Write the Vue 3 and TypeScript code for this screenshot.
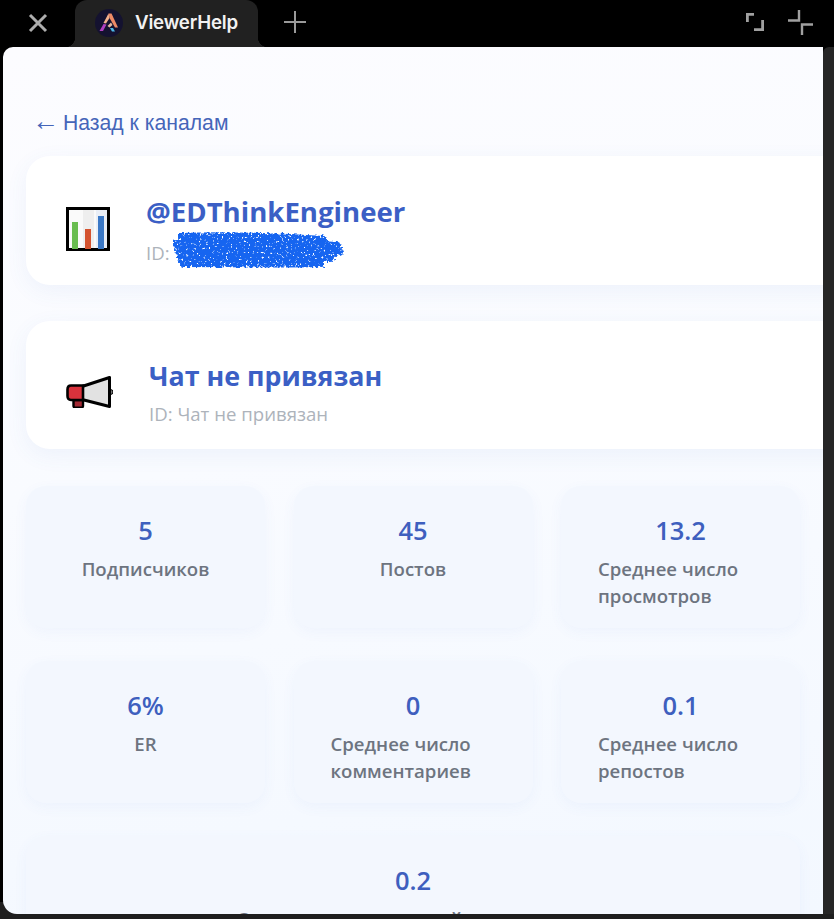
<script setup lang="ts">
interface Stat { value: string; label: string; wide?: boolean }
const stats: Stat[] = [
  { value: '5', label: 'Подписчиков' },
  { value: '45', label: 'Постов' },
  { value: '13.2', label: 'Среднее число просмотров' },
  { value: '6%', label: 'ER' },
  { value: '0', label: 'Среднее число комментариев' },
  { value: '0.1', label: 'Среднее число репостов' },
  { value: '0.2', label: 'Среднее число реакций на один пост', wide: true },
]
</script>

<template>
  <div class="shell">
    <header class="topbar">
      <svg class="close" viewBox="0 0 20 20" width="20" height="20" fill="none" stroke="#aeaeae" stroke-width="3">
        <path d="M2 2 18 18M18 2 2 18" />
      </svg>
      <div class="tab">
        <svg class="logo" viewBox="0 0 28 28" width="28" height="28">
          <circle cx="14" cy="14" r="14" fill="#141230" />
          <path d="M13.500 4.500 8.500 14 11 14.500 14.500 9Z" fill="#f3b08c" />
          <path d="M13.500 4.500 16.500 4.500 23 18.500 20 18.500 14.500 9Z" fill="#ee8a66" />
          <path d="M8.500 15 11.500 15.500 8 22 4.500 22Z" fill="#b13fc0" />
          <path d="M12.500 17 16 13.500 17.500 16 14.500 18.500Z" fill="#e8b9a0" />
          <path d="M15 19 18 19 20 22.500 17 22.500Z" fill="#4db8e8" />
        </svg>
        <span class="tab-title">ViewerHelp</span>
      </div>
      <svg class="plus" viewBox="0 0 22 22" width="22" height="22" fill="none" stroke="#9a9a9a" stroke-width="2">
        <path d="M11 0V22M0 11H22" />
      </svg>
      <div class="spacer"></div>
      <svg class="expand" viewBox="0 0 18 18" width="18" height="18" fill="none" stroke="#a0a0a0" stroke-width="2.800">
        <path d="M8 1.400H1.400V9M16.600 7V16.600H8" />
      </svg>
      <svg class="compress" viewBox="0 0 25 25" width="25" height="25" fill="none" stroke="#a0a0a0" stroke-width="2.400">
        <path d="M0 10.500H11V0M25 14.500H14V25" />
      </svg>
    </header>

    <div class="body-row">
      <main class="view">
        <a class="back"><span class="arrow">←</span><span>Назад к каналам</span></a>

        <section class="card card-first">
          <svg class="icon-chart" viewBox="0 0 44 44" width="44" height="44">
            <rect x="1.500" y="1.500" width="41" height="41" fill="#fafafa" stroke="#000" stroke-width="3" />
            <rect x="17" y="3" width="11" height="38" fill="#eeeeee" />
            <rect x="30" y="3" width="11" height="38" fill="#e9eef6" />
            <rect x="6" y="15" width="6" height="27" fill="#69bd50" />
            <rect x="19" y="22" width="6" height="20" fill="#d4532f" />
            <rect x="32" y="9" width="6" height="33" fill="#3a78c6" />
          </svg>
          <div class="info">
            <h2 class="title title-first">@EDThinkEngineer</h2>
            <p class="sub sub-first">
              ID:
              <svg class="scribble" viewBox="0 0 172 38" width="172" height="38">
                <defs>
                  <filter id="rough" x="-5%" y="-15%" width="110%" height="130%">
                    <feTurbulence type="fractalNoise" baseFrequency="0.35" numOctaves="2" seed="4" result="n" />
                    <feDisplacementMap in="SourceGraphic" in2="n" scale="7" result="d" />
                    <feTurbulence type="fractalNoise" baseFrequency="0.45" numOctaves="2" seed="9" />
                    <feColorMatrix type="matrix" values="0 0 0 0 0  0 0 0 0 0  0 0 0 0 0  0 0 0 -7 5.400" result="holes" />
                    <feComposite in="d" in2="holes" operator="in" />
                  </filter>
                </defs>
                <g filter="url(#rough)" fill="none" stroke="#1565f0" stroke-linecap="round" stroke-width="8">
                  <path d="M8 7C50 5 110 7 150 10" />
                  <path d="M4 14C50 12 120 13 164 16" />
                  <path d="M6 21C60 20 120 19 166 22" />
                  <path d="M8 28C60 27 110 28 158 28" />
                  <path d="M10 33C50 33 100 34 148 33" />
                </g>
              </svg>
            </p>
          </div>
        </section>

        <section class="card card-second">
          <svg class="icon-mega" viewBox="0 0 47 32" width="47" height="32">
            <circle cx="44.500" cy="16" r="2.500" fill="#777" stroke="#000" stroke-width="1" />
            <path d="M7.500 24H17V30A1.800 1.800 0 0 1 15.200 31.800H9.300A1.800 1.800 0 0 1 7.500 30Z" fill="#a32a34" stroke="#000" stroke-width="2.400" />
            <path d="M16 10.500 43.500 1.500V30.500L16 23.500Z" fill="#e2e2e2" stroke="#000" stroke-width="3" stroke-linejoin="round" />
            <path d="M5 9.500H17V24H5Q1.500 24 1.500 20V13.500Q1.500 9.500 5 9.500Z" fill="#d9323c" stroke="#000" stroke-width="2.600" />
          </svg>
          <div class="info">
            <h2 class="title title-second">Чат не привязан</h2>
            <p class="sub">ID: Чат не привязан</p>
          </div>
        </section>

        <section class="stats">
          <div v-for="s in stats" :key="s.value + s.label" class="stat" :class="{ wide: s.wide }">
            <div class="value">{{ s.value }}</div>
            <div class="label">{{ s.label }}</div>
          </div>
        </section>
      </main>
      <div class="scrollbar"></div>
    </div>
  </div>
</template>

<style>
html, body { margin: 0; background: #000; overflow: hidden; }
</style>

<style scoped>
.shell {
  width: 834px;
  height: 919px;
  display: flex;
  flex-direction: column;
  background: #000;
  overflow: hidden;
}
.topbar {
  height: 47px;
  flex: none;
  display: flex;
  align-items: center;
  padding-left: 28px;
  padding-right: 21px;
  box-sizing: border-box;
}
.close { flex: none; width: 20px; height: 20px; margin-bottom: 2px; }
.tab {
  position: relative;
  margin-left: 27px;
  width: 183px;
  height: 47px;
  flex: none;
  display: flex;
  align-items: center;
  gap: 12px;
  padding-left: 20px;
  box-sizing: border-box;
  background: #212121;
  border-radius: 12px 12px 0 0;
}
.tab::before,
.tab::after {
  content: "";
  position: absolute;
  bottom: 0;
  width: 10px;
  height: 10px;
}
.tab::before { left: -10px; background: radial-gradient(circle at 0 0, transparent 10px, #212121 10.500px); }
.tab::after { right: -10px; background: radial-gradient(circle at 100% 0, transparent 10px, #212121 10.500px); }
.logo { flex: none; margin-bottom: 2px; }
.tab-title {
  font-family: Inter, "Liberation Sans", sans-serif;
  font-size: 18.700px;
  font-weight: 600;
  color: #f2f2f2;
  letter-spacing: -0.2px;
  margin-bottom: 3px;
}
.plus { flex: none; margin-left: 26px; margin-bottom: 3px; }
.spacer { flex: 1; }
.expand { flex: none; margin-bottom: 3px; }
.compress { flex: none; margin-left: 24px; margin-bottom: 3px; }

.body-row {
  flex: 1;
  min-height: 0;
  display: flex;
  padding: 0 0 5px 3px;
  background: linear-gradient(#000 98%, #1e1e1e 98%);
}
.view {
  width: 820px;
  flex: none;
  overflow: hidden;
  box-sizing: border-box;
  padding: 64px 0 0 23px;
  border-radius: 10px 0 0 14px;
  background: linear-gradient(170deg, #fcfcff 0%, #f9fbff 45%, #f3f8ff 100%);
}
.scrollbar {
  width: 11px;
  flex: none;
  background: #262626;
  border-radius: 6px 0 0 0;
}
.back {
  display: flex;
  align-items: center;
  gap: 4px;
  height: 24px;
  margin-left: 6px;
  font-family: "Liberation Sans", Arial, sans-serif;
  font-size: 21.200px;
  line-height: 24px;
  color: #4565b9;
  white-space: nowrap;
}
.arrow { font-size: 27px; line-height: 24px; margin-bottom: 4px; }
.card {
  margin-top: 21px;
  width: 840px;
  box-sizing: border-box;
  display: flex;
  gap: 36px;
  background: #fff;
  border-radius: 24px;
  padding-left: 40px;
  box-shadow: 0 6px 22px rgba(70, 110, 200, 0.07);
}
.card-first { height: 129px; padding-top: 36px; }
.card-second { height: 128px; margin-top: 36px; padding-top: 36px; }
.icon-chart { flex: none; margin-top: 15px; }
.icon-mega { flex: none; margin-top: 19px; }
.info { display: flex; flex-direction: column; }
.title {
  margin: 0;
  font-family: "Open Sans", "Noto Sans", sans-serif;
  line-height: 38px;
  font-weight: 700;
  color: #3b5fc5;
}
.title-first { font-size: 27.600px; }
.title-second { font-size: 26.800px; }
.sub {
  margin: 5px 0 0;
  font-family: "Open Sans", "Noto Sans", sans-serif;
  font-size: 18.600px;
  line-height: 27px;
  color: #adb3bb;
  white-space: nowrap;
}
.sub-first {
  display: flex;
  align-items: center;
  gap: 3px;
  margin-top: 7px;
}
.scribble { flex: none; margin: -7px 0 0 0; }
.stats {
  margin-top: 37px;
  width: 774px;
  display: grid;
  grid-template-columns: repeat(3, 239px);
  gap: 33px 28.500px;
}
.stat {
  display: flex;
  flex-direction: column;
  align-items: center;
  padding: 26px 37px 19px;
  background: #f3f7fe;
  border-radius: 20px;
  box-shadow: 0 4px 14px rgba(80, 120, 210, 0.05);
  font-family: "Open Sans", "Noto Sans", sans-serif;
}
.stat.wide { grid-column: 1 / -1; }
.value {
  font-size: 25.500px;
  line-height: 36px;
  font-weight: 600;
  color: #3e5fbe;
}
.label {
  margin-top: 7px;
  font-size: 18.600px;
  line-height: 27px;
  font-weight: 600;
  color: #6d7480;
}
</style>
